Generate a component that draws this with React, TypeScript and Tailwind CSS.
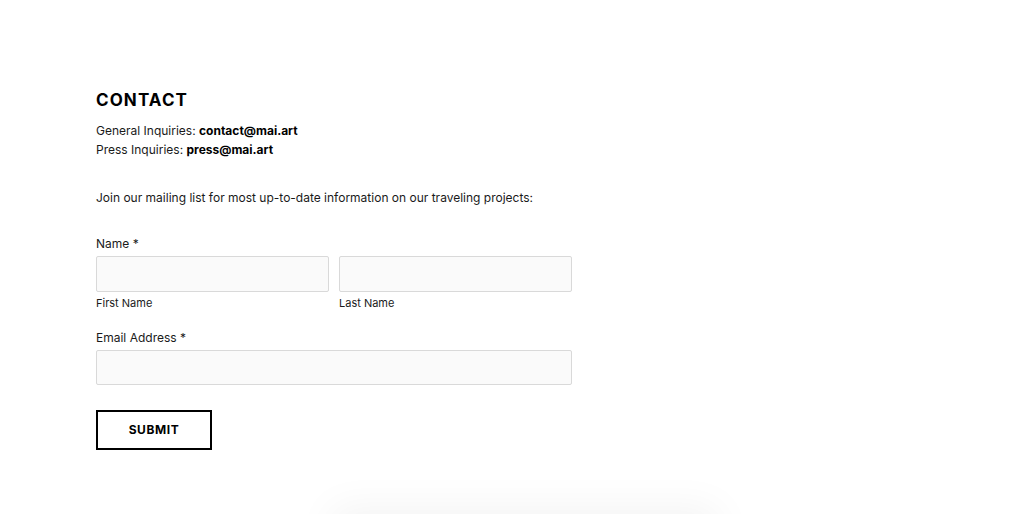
export default function App() {
  return (
    <div className="relative h-[514px] w-[1024px] overflow-hidden bg-white text-[#1a1a1a] [font-family:Inter,'Liberation_Sans',Arial,sans-serif]">
      <section className="pl-[96px] pt-[90px]">
        <h2 className="text-[17px] font-bold leading-[20px] tracking-[1.1px] text-black">CONTACT</h2>

        <div className="mt-[11px] text-[12px] leading-[19px]">
          <p>
            General Inquiries: <span className="font-bold text-black">contact@mai.art</span>
          </p>
          <p>
            Press Inquiries: <span className="font-bold text-black">press@mai.art</span>
          </p>
        </div>

        <p className="mt-[29px] text-[12px] leading-[19px]">
          Join our mailing list for most up-to-date information on our traveling projects:
        </p>

        <form className="mt-[30px] w-[476px]">
          <label className="block text-[12px] leading-[14px]">Name *</label>
          <div className="mt-[5px] flex gap-[10px]">
            <div className="flex-1">
              <input className="block h-[36px] w-full rounded-[2px] border border-[#d9d9d9] bg-[#fafafa]" />
              <span className="mt-[5px] block text-[11px] leading-[12px]">First Name</span>
            </div>
            <div className="flex-1">
              <input className="block h-[36px] w-full rounded-[2px] border border-[#d9d9d9] bg-[#fafafa]" />
              <span className="mt-[5px] block text-[11px] leading-[12px]">Last Name</span>
            </div>
          </div>

          <label className="mt-[22px] block text-[12px] leading-[14px]">Email Address *</label>
          <input className="mt-[5px] block h-[35px] w-full rounded-[2px] border border-[#d9d9d9] bg-[#fafafa]" />

          <button
            type="button"
            className="mt-[25px] flex h-[40px] w-[116px] items-center justify-center border-2 border-black bg-white text-[12px] font-bold tracking-[0.6px] text-black"
          >
            SUBMIT
          </button>
        </form>
      </section>

      {/* faint shadow of the panel below */}
      <div className="absolute left-[340px] top-[516px] h-[40px] w-[370px] bg-white shadow-[0_0_40px_8px_rgba(0,0,0,0.05)]" />
    </div>
  );
}
